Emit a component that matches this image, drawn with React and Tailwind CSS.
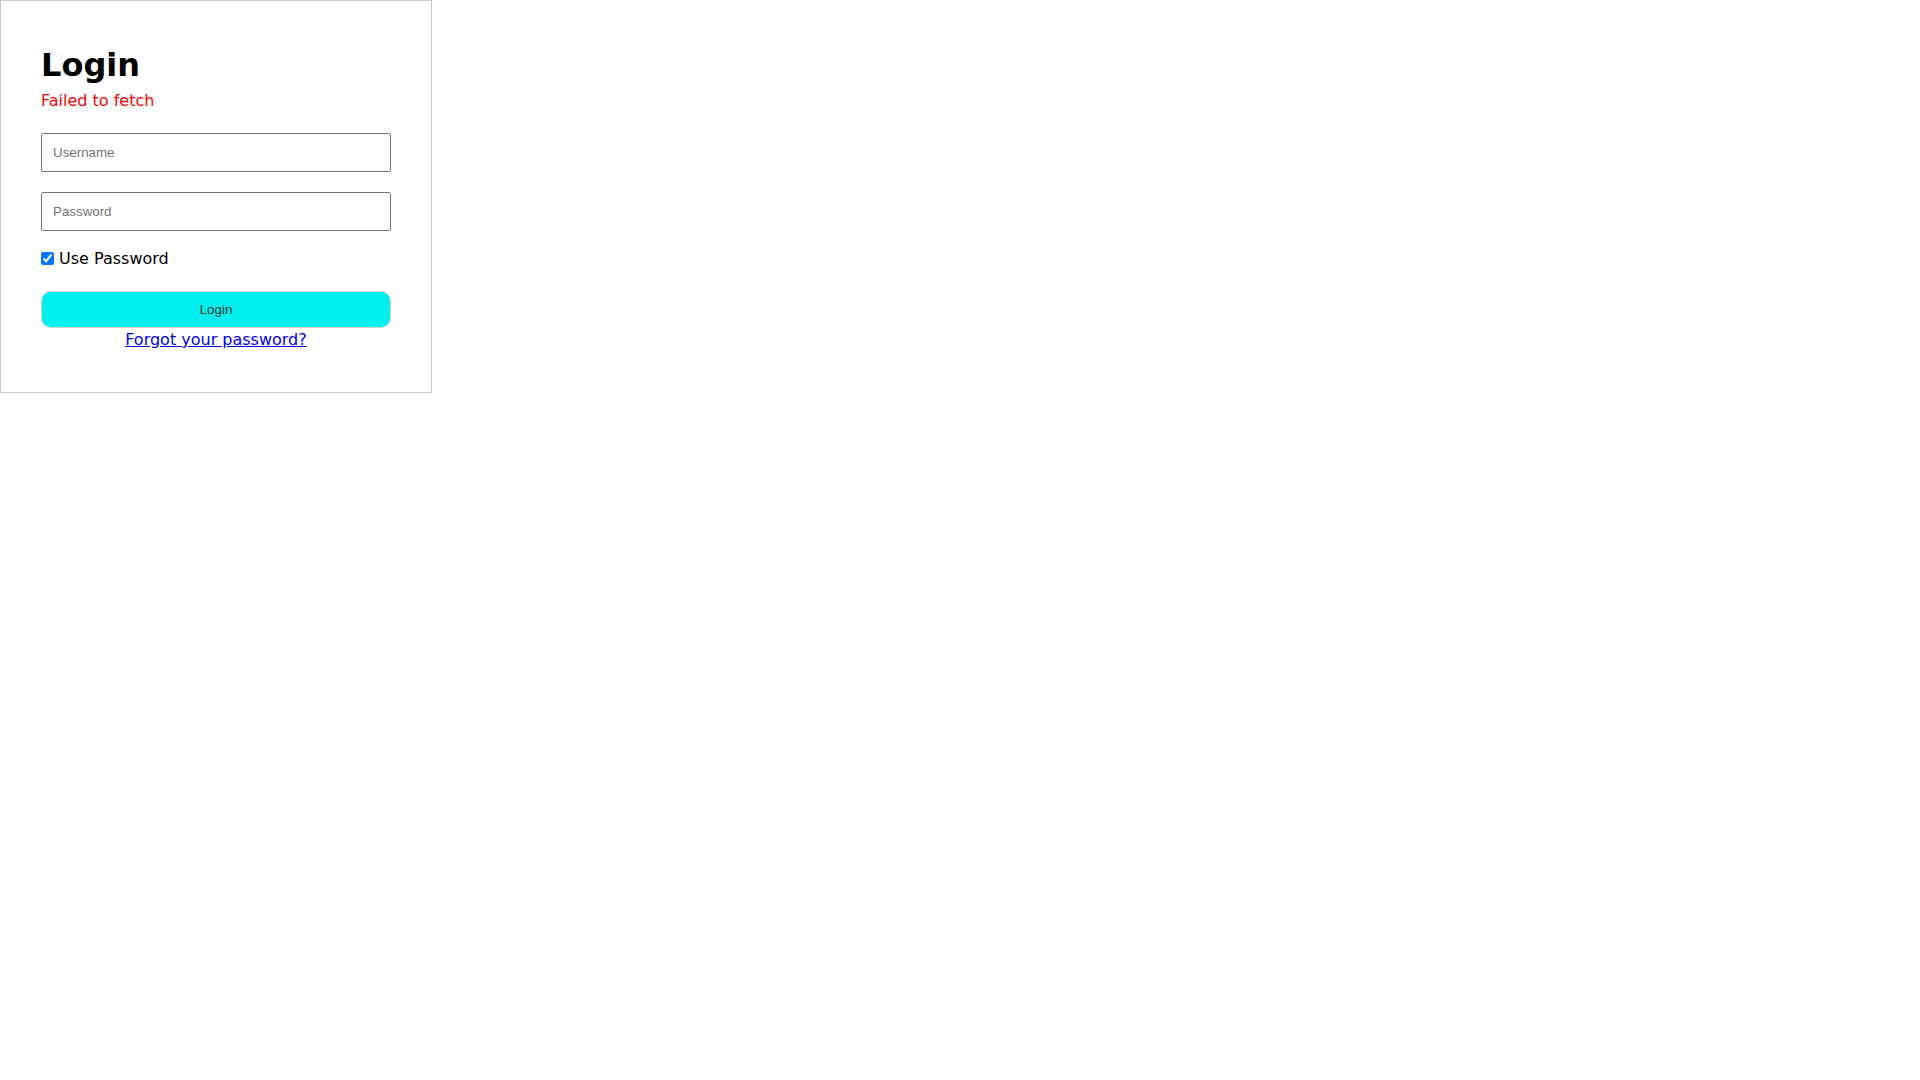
import { useState } from 'react';

// Login card, top-left of an otherwise empty page
export default function App() {
  const [usePassword, setUsePassword] = useState(true);

  return (
    <div className="min-h-screen bg-white font-['DejaVu_Sans',sans-serif] text-black">
      <div className="w-[432px] border border-[#cccccc] px-10 pt-[46px] pb-[43px]">
        <h1 className="text-[32px] font-bold leading-[37px]">Login</h1>
        <div className="mt-[7px] text-base leading-[19px] text-[#ff0000]">Failed to fetch</div>

        <form className="mt-[23px] flex flex-col" onSubmit={(e) => e.preventDefault()}>
          <input
            type="text"
            placeholder="Username"
            className="h-[39px] w-full rounded-[2px] border border-[#767676] px-[11px] font-['Liberation_Sans',Arial,sans-serif] text-[13.33px] placeholder:text-[#757575]"
          />
          <input
            type="password"
            placeholder="Password"
            className="mt-[20px] h-[39px] w-full rounded-[2px] border border-[#767676] px-[11px] font-['Liberation_Sans',Arial,sans-serif] text-[13.33px] placeholder:text-[#757575]"
          />

          <label className="mt-[18px] flex items-center text-base leading-[19px]">
            <input
              type="checkbox"
              checked={usePassword}
              onChange={(e) => setUsePassword(e.target.checked)}
              className="m-0 mr-[5px] h-[13px] w-[13px] accent-[#0075ff]"
            />
            Use Password
          </label>

          <button
            type="submit"
            className="mt-[23px] h-[37px] w-full rounded-[10px] border border-[#d4d4d4] bg-[#00efef] font-['Liberation_Sans',Arial,sans-serif] text-[13.33px] text-[#333333]"
          >
            Login
          </button>
        </form>

        <div className="mt-[2px] text-center text-base leading-[19px]">
          <a href="#" className="text-[#0000ee] underline">
            Forgot your password?
          </a>
        </div>
      </div>
    </div>
  );
}
